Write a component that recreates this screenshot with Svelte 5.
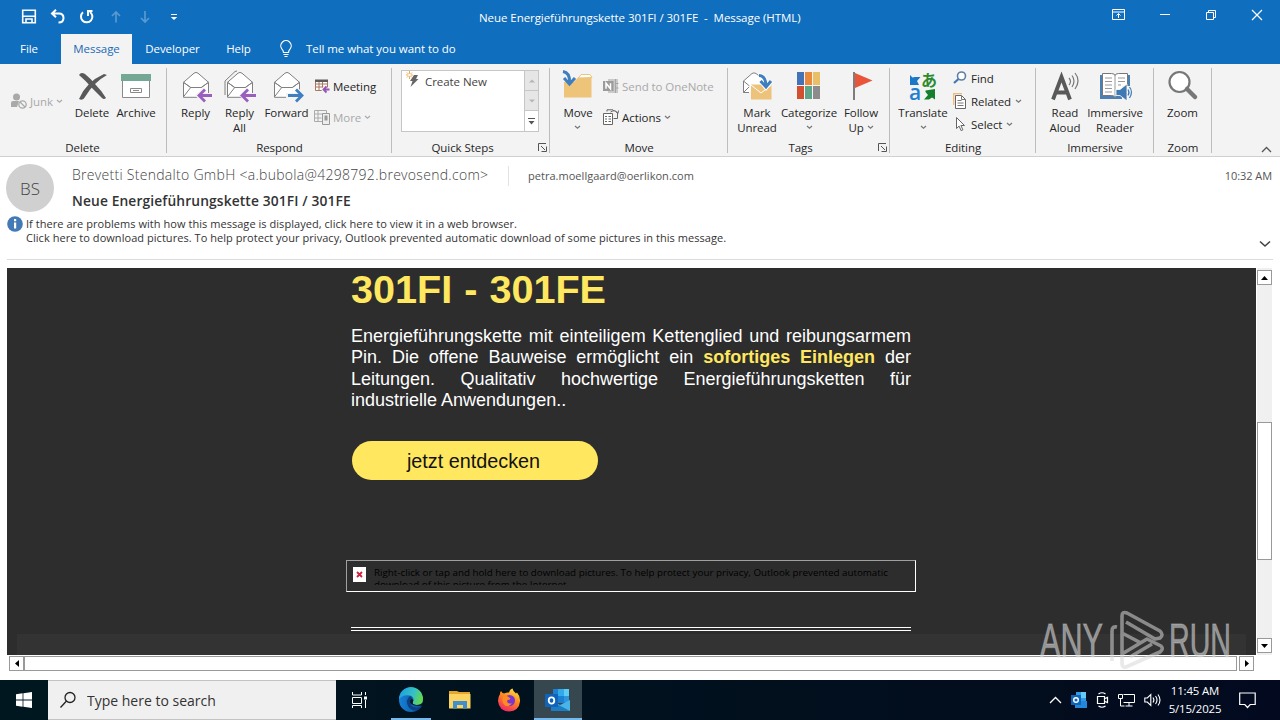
<script lang="ts">
  const tabs = ['File', 'Message', 'Developer', 'Help'];
  let activeTab = $state('Message');
  let search = $state('');
</script>

{#snippet chevron()}
  <svg class="chev" width="7" height="5" viewBox="0 0 7 5"><path d="M1 1l2.5 2.3L6 1" /></svg>
{/snippet}

{#snippet launcher()}
  <svg class="launcher" width="9" height="9" viewBox="0 0 9 9">
    <path d="M.5 8V.5H8M3 3l4 4M8.5 3.5v5h-5" />
  </svg>
{/snippet}

{#snippet envelope()}
  <path class="paper" d="M3.5 12.5v14.8h25V12.5" />
  <path class="paper" d="M3.5 12.3L14 3.2q2-1.6 4 0l10.5 9.1-7.2 5.2H10.7z" />
  <path class="line" d="M3.5 26.8l7.2-9.3M3.5 12.3l7.2 5.2h10.6l7.2-5.2" />
{/snippet}

<div class="screen">
  <header class="titlebar">
    <div class="quick-access">
      <svg width="16" height="16" viewBox="0 0 16 16">
        <path class="w" d="M1.7 1.2h12.6v12.6H1.7zM2 7.2h12M5 13.500v-3.500h6v3.500" stroke-width="1.6" />
      </svg>
      <svg width="16" height="16" viewBox="0 0 16 16">
        <path class="w" d="M6 .8L2 4.500l4 3.800M2.500 4.500H9q4.500 0 4.500 4.500Q13.500 13.500 8.500 13.500" stroke-width="2" />
      </svg>
      <svg width="16" height="16" viewBox="0 0 16 16">
        <path class="w" d="M4 3.300A5.700 5.700 0 1 0 11 3M9 7V2h4.500" stroke-width="2" />
      </svg>
      <svg class="dim" width="16" height="16" viewBox="0 0 16 16">
        <path class="w" d="M8 13.500V3M4 7l4-4 4 4" stroke-width="1.700" />
      </svg>
      <svg class="dim" width="16" height="16" viewBox="0 0 16 16">
        <path class="w" d="M8 2v11M4 9l4 4 4-4" stroke-width="1.700" />
      </svg>
      <svg width="16" height="16" viewBox="0 0 16 16">
        <path d="M5 5h6v1H5zM4.800 8h6.400L8 11z" fill="#fff" />
      </svg>
    </div>
    <span class="title">Neue Energieführungskette 301FI / 301FE &nbsp;-&nbsp; Message (HTML)</span>
    <div class="window-buttons">
      <svg width="14" height="12" viewBox="0 0 14 12"><path class="w" d="M1.500.5h12v10h-12zM1.500 3h12M7.500 9V5M5.500 6.500l2-2 2 2" /></svg>
      <svg width="12" height="12" viewBox="0 0 12 12"><path class="w" d="M1 5.500h10" /></svg>
      <svg width="12" height="12" viewBox="0 0 12 12"><path class="w" d="M1.500 3.500h7v7h-7zM3.500 3V1.500h7v7H9" /></svg>
      <svg width="12" height="12" viewBox="0 0 12 12"><path class="w" d="M1 1l10 10M11 1L1 11" stroke-width="1.200" /></svg>
    </div>
  </header>

  <nav class="tabs">
    {#each tabs as tab}
      <button class={['tab', tab.toLowerCase(), { active: tab === activeTab }]} onclick={() => (activeTab = tab)}>{tab}</button>
    {/each}
    <svg class="bulb" width="14" height="18" viewBox="0 0 14 18">
      <path class="w" d="M4.500 12.500q0-2-1.700-3.600a5.200 5.200 0 1 1 8.400 0Q9.500 10.500 9.500 12.500zM4.500 14.500h5M5.500 16.500h3" stroke-width="1.200" />
    </svg>
    <span class="tell">Tell me what you want to do</span>
  </nav>

  <section class="ribbon">
    <div class="group delete">
      <div class="tools">
        <div class="small one off">
          <span class="row">
            <svg width="16" height="16" viewBox="0 0 16 16">
              <circle cx="5.500" cy="4" r="3.500" fill="#a9a9a9" />
              <path d="M0 14V9.500Q0 8 2 8h6l-2 6z" fill="#a9a9a9" />
              <circle cx="11.500" cy="11.500" r="3.700" fill="#f3f3f3" stroke="#a9a9a9" stroke-width="1.300" />
              <path d="M9 9l5 5" stroke="#a9a9a9" stroke-width="1.300" />
            </svg>
            <span>Junk</span>{@render chevron()}
          </span>
        </div>
        <div class="big">
          <svg width="32" height="32" viewBox="0 0 32 32">
            <path d="M3 5q2-3.500 6-1 5 4 10 10 6 6 11 14-2 2-4 0-5-5-10-10Q9 10 3 5z" fill="#595959" />
            <path d="M31 5Q18 12 9 27q-2 4-6 2Q10 12 28 4z" fill="#595959" />
          </svg>
          <span>Delete</span>
        </div>
        <div class="big">
          <svg width="32" height="32" viewBox="0 0 32 32">
            <path d="M2.500 10h27v17.500h-27z" fill="#fff" stroke="#8a8a8a" />
            <path d="M1 4h30v7H1z" fill="#75a795" />
            <path d="M10.500 18.500h11v4h-11zM13 20.500h6" fill="none" stroke="#8a8a8a" />
          </svg>
          <span>Archive</span>
        </div>
      </div>
      <div class="caption">Delete</div>
    </div>

    <div class="group respond">
      <div class="tools">
        <div class="big">
          <svg width="32" height="32" viewBox="0 0 32 32">
            {@render envelope()}
            <path d="M33 25.500H19M25 19.500l-6.500 6 6.500 6" class="halo" />
            <path d="M32 25.500H19M25 19.500l-6 6 6 6" class="purple" />
          </svg>
          <span>Reply</span>
        </div>
        <div class="big">
          <svg width="32" height="32" viewBox="0 0 32 32">
            <path class="line" d="M1 25V11L11 1.500l2-.5" />
            {@render envelope()}
            <path d="M33 25.500H19M25 19.500l-6.500 6 6.500 6" class="halo" />
            <path d="M32 25.500H18M24 19.500l-6 6 6 6" class="purple" />
          </svg>
          <span>Reply<br />All</span>
        </div>
        <div class="big forward">
          <svg width="32" height="32" viewBox="0 0 32 32">
            {@render envelope()}
            <path d="M15 25.500h16M25 19.500l6.500 6-6.500 6" class="halo" />
            <path d="M17 25.500h14M25 19.500l6 6-6 6" class="blue" />
          </svg>
          <span>Forward</span>
        </div>
        <div class="small two">
          <span class="row">
            <svg width="16" height="16" viewBox="0 0 16 16">
              <path d="M1.500 2.500h12v10h-12zM1.500 6h12M5 3v9M8.500 3v9M1.500 9h12" fill="#fff" stroke="#a8775c" />
              <path d="M1 1.500h13V4H1z" fill="#5b5b5b" />
              <path d="M16 11.500H9.500M12.500 8.500l-3 3 3 3" fill="none" stroke="#f3f3f3" stroke-width="4" />
              <path d="M15.500 11.500H9.500M12.500 8.500l-3 3 3 3" fill="none" stroke="#9055b5" stroke-width="1.800" />
            </svg>
            <span>Meeting</span>
          </span>
          <span class="row off">
            <svg width="16" height="16" viewBox="0 0 16 16">
              <path d="M.5 1.500h12v11H.5zM.5 5h12M4 2v10M.5 9h7" fill="none" stroke="#aaa" />
              <path d="M8.500 4.500h7v11h-7z" fill="#eee" stroke="#999" />
              <path d="M10.500 6.500h3v5h-3z" fill="#999" />
            </svg>
            <span>More</span>{@render chevron()}
          </span>
        </div>
      </div>
      <div class="caption">Respond</div>
    </div>

    <div class="group steps">
      <div class="tools">
        <div class="gallery">
          <div class="gallery-item">
            <svg width="16" height="18" viewBox="0 0 16 18">
              <path d="M3.500 0v8M0 4h7M1 1.500l5 5M6 1.500l-5 5" stroke="#e8a33d" stroke-width=".9" />
              <circle cx="3.500" cy="4" r="1.300" fill="#fff" />
              <path d="M8 4h4l-2 4h2.500L4.500 16l2-6H4z" fill="#666" />
            </svg>
            <span>Create New</span>
          </div>
          <div class="gallery-nav">
            <span><svg width="6" height="4" viewBox="0 0 6 4"><path d="M0 3.500L3 .5l3 3z" fill="#b5b5b5" /></svg></span>
            <span><svg width="6" height="4" viewBox="0 0 6 4"><path d="M0 .5l3 3 3-3z" fill="#b5b5b5" /></svg></span>
            <span class="on"><svg width="7" height="7" viewBox="0 0 7 7"><path d="M0 0h7v1H0zM.5 3l3 3.500 3-3.500z" fill="#555" /></svg></span>
          </div>
        </div>
      </div>
      <div class="caption">Quick Steps</div>
      {@render launcher()}
    </div>

    <div class="group move">
      <div class="tools">
        <div class="big">
          <svg width="32" height="32" viewBox="0 0 32 32">
            <path d="M2 27.500V12h10l4-4.500h13.500v20z" fill="#eec47a" />
            <path d="M16.500 8l2.500-3.500h9l2 3z" fill="#fff" stroke="#eec47a" />
            <path d="M1 1.500q7 1 6.500 11M2 8l5.500 6L13 8" fill="none" stroke="#3f7fbf" stroke-width="3" />
          </svg>
          <span>Move<br />{@render chevron()}</span>
        </div>
        <div class="small two">
          <span class="row off">
            <svg width="16" height="16" viewBox="0 0 16 16">
              <path d="M5 1h10v14H5z" fill="#c9c9c9" />
              <path d="M12.500 1v14M12 5.500h3.500M12 10h3.500" stroke="#a5a5a5" />
              <path d="M0 3h10.500v10H0z" fill="#9b9b9b" />
              <path d="M3 10.800V5.200l4.500 5.600V5.200" fill="none" stroke="#fff" stroke-width="1.500" />
            </svg>
            <span>Send to OneNote</span>
          </span>
          <span class="row">
            <svg width="16" height="16" viewBox="0 0 16 16">
              <path d="M.5 4.500h9v11h-9z" fill="#fff" stroke="#666" />
              <path d="M2 7.500h2M5.500 7.500h2.500M2 10h2M5.500 10h2.500M2 12.500h2M5.500 12.500h2.500" stroke="#666" />
              <path d="M4 2.500V.8h6l1.500 1.500M7.500 3q5-3 7 1v5.500h-4M12.500 2.500l2.500 2 .5-3" fill="none" stroke="#666" />
            </svg>
            <span>Actions</span>{@render chevron()}
          </span>
        </div>
      </div>
      <div class="caption">Move</div>
    </div>

    <div class="group tags">
      <div class="tools">
        <div class="big">
          <svg width="32" height="32" viewBox="0 0 32 32">
            <path class="paper" d="M8 22.500H2.500V11L11 3.500q2-1.300 4 0l9 7" />
            <path class="line" d="M2.500 11l6 5M8 17l-5.500 5.500" />
            <path d="M10 14.500h20.500v15H10z" fill="#edc27a" />
            <path d="M10 15l10 8 10.500-8" fill="none" stroke="#fff" />
            <path d="M17.500 5.500q7 0 7.500 10M19.500 11l5.500 6.500L30 11" fill="none" stroke="#fff" stroke-width="4.500" />
            <path d="M18 5.500q6.500 0 7 10M19.500 11l5.500 6L30 11" fill="none" stroke="#3f7fbf" stroke-width="3" />
          </svg>
          <span>Mark<br />Unread</span>
        </div>
        <div class="big">
          <svg width="32" height="32" viewBox="0 0 32 32">
            <path d="M4 2h7v13H4z" fill="#4472b8" /><path d="M12 2h7v13h-7z" fill="#e8893c" /><path d="M20 2h7v13h-7z" fill="#e9bf68" />
            <path d="M4 16h7v13H4z" fill="#d2502f" /><path d="M12 16h7v13h-7z" fill="#5fa58a" /><path d="M20 16h7v13h-7z" fill="#8c8c8c" />
          </svg>
          <span>Categorize<br />{@render chevron()}</span>
        </div>
        <div class="big">
          <svg width="32" height="32" viewBox="0 0 32 32">
            <path d="M8 2h2v28H8z" fill="#7d7d7d" /><path d="M10 3l17.500 7.500L10 18z" fill="#e9553a" />
          </svg>
          <span>Follow<br />Up {@render chevron()}</span>
        </div>
      </div>
      <div class="caption">Tags</div>
      {@render launcher()}
    </div>

    <div class="group editing">
      <div class="tools">
        <div class="big">
          <svg width="32" height="32" viewBox="0 0 32 32">
            <text x="14" y="16" class="kana">あ</text>
            <text x="2" y="29.500" class="latin">a</text>
            <path d="M3 5l2.500 2.500L8 7h5.500L10 11l2 4H3z" fill="#1c77c8" />
            <path d="M28 19v10.500l-3-2-3 2h-5l4-4.500-2.500-3v-1.500z" fill="#12802c" />
          </svg>
          <span>Translate<br />{@render chevron()}</span>
        </div>
        <div class="small three">
          <span class="row">
            <svg width="14" height="14" viewBox="0 0 14 14">
              <circle cx="8.500" cy="5" r="4" fill="#fff" stroke="#5d7ea8" stroke-width="1.600" /><path d="M5.500 8L1 12" stroke="#4577b0" stroke-width="2.200" />
            </svg>
            <span>Find</span>
          </span>
          <span class="row">
            <svg width="14" height="16" viewBox="0 0 14 16">
              <path d="M.7 12V.7H9" fill="none" stroke="#f0b876" stroke-width="1.300" />
              <path d="M2.500 2.500h6l4 4v9h-10z" fill="#fff" stroke="#666" /><path d="M8.500 2.500v4h4M4.500 7.500h4M4.500 10h6M4.500 12.500h6" fill="none" stroke="#777" />
            </svg>
            <span>Related</span>{@render chevron()}
          </span>
          <span class="row">
            <svg width="14" height="16" viewBox="0 0 14 16">
              <path d="M3.500 1.500v11l2.600-2.400 2 4.500 1.800-.8-2-4.300h3.600z" fill="#fff" stroke="#666" />
            </svg>
            <span>Select</span>{@render chevron()}
          </span>
        </div>
      </div>
      <div class="caption">Editing</div>
    </div>

    <div class="group immersive">
      <div class="tools">
        <div class="big">
          <svg width="32" height="32" viewBox="0 0 32 32">
            <path d="M4 29.500L12.500 7 21 29.500M7 22.500h11" fill="none" stroke="#595959" stroke-width="3.800" />
            <path d="M20 8q3 3.500 0 7M23 5.500q4 5.500 0 11.500M26 3q6 7.500 0 16" fill="none" stroke="#777" stroke-width="1.200" />
          </svg>
          <span>Read<br />Aloud</span>
        </div>
        <div class="big">
          <svg width="32" height="32" viewBox="0 0 32 32">
            <path d="M1 5h30v24H1z" fill="#4a80b5" />
            <path d="M3.500 3.500h9q3 0 3.500 2 .5-2 3.500-2h9v22h-9q-3 0-3.500 2-.5-2-3.500-2h-9z" fill="#fff" stroke="#777" />
            <path d="M16 5v22M6 8h7M6 11.500h7M6 15h7M6 18.500h7M6 22h7M19 8h7M19 11.500h7M19 15h3" stroke="#999" />
            <path d="M23 16h9v15h-9z" fill="#f3f3f3" />
            <path d="M17 19.500h4l7-5.500v17l-7-5.500h-4z" fill="#3f79b3" stroke="#fff" stroke-width=".8" />
            <path d="M29 19.500q2 3 0 6M30.500 17q4 5 0 11" fill="none" stroke="#3f79b3" stroke-width="1.200" />
          </svg>
          <span>Immersive<br />Reader</span>
        </div>
      </div>
      <div class="caption">Immersive</div>
    </div>

    <div class="group zoom">
      <div class="tools">
        <div class="big">
          <svg width="32" height="32" viewBox="0 0 32 32">
            <circle cx="12.500" cy="12" r="10" fill="#fff" stroke="#777" stroke-width="2.200" /><path d="M20 19l8 8" stroke="#777" stroke-width="4.500" stroke-linecap="round" />
          </svg>
          <span>Zoom</span>
        </div>
      </div>
      <div class="caption">Zoom</div>
    </div>
    <svg class="collapse" width="11" height="7" viewBox="0 0 11 7"><path d="M1 6l4.500-4.500L10 6" /></svg>
  </section>

  <section class="envelope">
    <div class="meta">
      <div class="avatar">BS</div>
      <div class="who">
        <div class="from-line">
          <span class="from">Brevetti Stendalto GmbH &lt;a.bubola@4298792.brevosend.com&gt;</span>
          <span class="to">petra.moellgaard@oerlikon.com</span>
          <time>10:32 AM</time>
        </div>
        <div class="subject">Neue Energieführungskette 301FI / 301FE</div>
      </div>
    </div>
    <div class="info">
      <svg width="16" height="16" viewBox="0 0 16 16">
        <circle cx="8" cy="8" r="7.800" fill="#4379b5" /><path d="M7 6.500h2.200v6H7zM7 3h2.200v2.200H7z" fill="#fff" />
      </svg>
      <div class="info-text">
        <div class="first">If there are problems with how this message is displayed, click here to view it in a web browser.</div>
        <div>Click here to download pictures. To help protect your privacy, Outlook prevented automatic download of some pictures in this message.</div>
      </div>
      <svg class="expand" width="12" height="8" viewBox="0 0 12 8"><path d="M1 1.500l5 4.500 5-4.500" /></svg>
    </div>
  </section>

  <main class="reader">
    <article class="mail">
      <div class="content">
        <h1>301FI - 301FE</h1>
        <p>
          Energieführungskette mit einteiligem Kettenglied und reibungsarmem Pin. Die offene Bauweise ermöglicht ein
          <b>sofortiges Einlegen</b> der Leitungen. Qualitativ hochwertige Energieführungsketten für industrielle Anwendungen..
        </p>
        <div class="cta">jetzt entdecken</div>
        <div class="blocked">
          <svg width="13" height="15" viewBox="0 0 13 15">
            <path d="M0 0h13v15H0z" fill="#fff" /><path d="M4 5l5 5M9 5l-5 5" stroke="#d0203a" stroke-width="1.800" />
          </svg>
          <span>Right-click or tap and hold here to download pictures. To help protect your privacy, Outlook prevented automatic download of this picture from the Internet.</span>
        </div>
        <hr />
      </div>
      <div class="footer-band"></div>
    </article>
    <div class="vscroll">
      <span class="arrow"><svg width="7" height="4" viewBox="0 0 7 4"><path d="M0 4l3.500-4L7 4z" /></svg></span>
      <span class="thumb"></span>
      <span class="arrow"><svg width="7" height="4" viewBox="0 0 7 4"><path d="M0 0l3.500 4L7 0z" /></svg></span>
    </div>
  </main>
  <div class="hscroll">
    <span class="arrow"><svg width="4" height="7" viewBox="0 0 4 7"><path d="M4 0L0 3.500 4 7z" /></svg></span>
    <span class="thumb"></span>
    <span class="arrow"><svg width="4" height="7" viewBox="0 0 4 7"><path d="M0 0l4 3.500L0 7z" /></svg></span>
  </div>

  <footer class="taskbar">
    <div class="start">
      <svg width="16" height="16" viewBox="0 0 16 16"><path d="M0 2.200L6.600 1.300v6.300H0zM7.400 1.200L16 0v7.600H7.400zM0 8.400h6.600v6.300L0 13.800zM7.400 8.400H16V16l-8.600-1.200z" fill="#fff" /></svg>
    </div>
    <label class="search">
      <svg width="18" height="18" viewBox="0 0 18 18"><circle cx="11" cy="6.500" r="5" /><path d="M7.500 10L1.500 16.500" /></svg>
      <input type="text" placeholder="Type here to search" bind:value={search} />
    </label>
    <div class="apps">
      <div class="app">
        <svg width="18" height="16" viewBox="0 0 18 16"><path d="M1.500 0v3h9V0M1.500 5.500h9v6h-9zM1.500 16v-2.500h9V16M14.500 0v3M14.500 8v8" fill="none" stroke="#fff" /><path d="M13 4.500h3v3h-3z" fill="#fff" /></svg>
      </div>
      <div class="app edge running">
        <svg width="26" height="26" viewBox="0 0 26 26">
          <defs>
            <linearGradient id="edge-top" x1="0" x2="1" y1=".2" y2=".5"><stop offset="0" stop-color="#1b9de2" /><stop offset=".6" stop-color="#35c1c4" /><stop offset="1" stop-color="#66d84b" /></linearGradient>
            <linearGradient id="edge-low" x1="0" x2="1"><stop offset="0" stop-color="#1683d8" /><stop offset="1" stop-color="#0c4a94" /></linearGradient>
          </defs>
          <circle cx="13" cy="13" r="12" fill="url(#edge-low)" />
          <path d="M1 12A12 12 0 0 1 25 12q0 6-6.500 6-5 0-3.500-3 2-5-3-6.500Q5 7 1 12z" fill="url(#edge-top)" />
          <path d="M12 9q-5 4-2 10 3 5 9 4.500 3-1 5-4.500-5 3-9.500.5-3.500-2.500-.5-6 .5-3-2-4.500z" fill="#0d3f83" />
          <path d="M13.500 12q-2.500 2-.5 5 3 2.500 11 1.500l1.500-3.500q-2 3-7 3-5-.5-3.500-3.500 1-2-1.500-2.500z" fill="#001722" />
        </svg>
      </div>
      <div class="app">
        <svg width="24" height="20" viewBox="0 0 24 20">
          <path d="M1 1h8l2 1h11v16H1z" fill="#e6a52c" /><path d="M1 4h21.500v14.500H1z" fill="#fcd462" />
          <path d="M5 18.500V11h14v7.500h-4V15H9v3.500z" fill="#3f8fcf" />
        </svg>
      </div>
      <div class="app">
        <svg width="24" height="24" viewBox="0 0 24 24">
          <defs><linearGradient id="fox" x1=".8" x2=".3" y1="0" y2="1"><stop offset="0" stop-color="#ffe14a" /><stop offset=".45" stop-color="#ff8a1c" /><stop offset="1" stop-color="#f0246a" /></linearGradient></defs>
          <path d="M3 6q0-2 1-3 1 2 3 2.500Q10 4 12 4.500 13 1 15.500.5q.5 3 3.500 5l1-1q3.500 4 3 9Q22 23 12 23.500 2 23 1 13q0-4 2-7z" fill="url(#fox)" />
          <circle cx="12.500" cy="12.500" r="5.500" fill="#7a35d0" />
          <path d="M6 9q4-2 6 .5 2 .5 1 2-3 0-3 2 1 3 5 1.500-3 4.500-7 2.500-4-3-2-8.500z" fill="#ff8c22" />
        </svg>
      </div>
      <div class="app current running">
        <svg width="26" height="24" viewBox="0 0 26 24">
          <path d="M8 1h16v14H8z" fill="#1a80d4" /><path d="M13 1h6v7h-6z" fill="#32a9e8" /><path d="M19 1h5v7h-5z" fill="#5ccbf5" /><path d="M19 8h5v6h-5z" fill="#2f96dd" />
          <path d="M6 23V12l9 5 10-5v11z" fill="#48b5e6" /><path d="M6 13l19 10H6z" fill="#1b7dc5" />
          <path d="M0 6h13v13H0z" fill="#0f63b8" /><ellipse cx="6.500" cy="12.500" rx="2.800" ry="3.200" fill="none" stroke="#fff" stroke-width="1.800" />
        </svg>
      </div>
    </div>
    <div class="tray">
      <svg width="13" height="8" viewBox="0 0 13 8"><path class="w" d="M1 7l5.500-5.500L12 7" stroke-width="1.300" /></svg>
      <svg width="16" height="16" viewBox="0 0 16 16">
        <path d="M5 0h10v14H5z" fill="#2f9be8" /><path d="M10 0h5v6h-5z" fill="#65cbf5" /><path d="M4 16V9h12v7z" fill="#2488d8" /><path d="M0 3h10v10H0z" fill="#0f63b8" />
        <circle cx="5" cy="8" r="2.300" fill="none" stroke="#fff" stroke-width="1.400" />
      </svg>
      <svg width="13" height="16" viewBox="0 0 13 16"><path class="w" d="M1.500 4.500h7v7h-7zM9 6.500l2.500-1v5l-2.500-1M2.500 2q3.500-2.500 7 0M2.500 14q3.500 2.500 7 0" stroke-width="1.200" /></svg>
      <svg width="17" height="14" viewBox="0 0 17 14"><path class="w" d="M5.500 1.500h11v8h-11M11 10v3M7.500 13h7M.5 1.500h4v4h-4zM2.500 5.500v7.500h4" /></svg>
      <svg width="17" height="14" viewBox="0 0 17 14"><path class="w" d="M.8 5h2.500l3.500-3.500v11L3.300 9H.8zM9 4.500q1.800 2.500 0 5M11.500 3q3 4 0 8M14 1.500q4 5.500 0 11" stroke-width="1.100" /></svg>
      <div class="clock"><span>11:45 AM</span><span class="date">5/15/2025</span></div>
      <svg class="notify" width="17" height="17" viewBox="0 0 17 17"><path class="w" d="M.7 1h15.500v11.500h-5L8.500 15.500l-2.700-3H.7z" stroke-width="1.200" /></svg>
    </div>
  </footer>

  <svg class="watermark" width="200" height="66" viewBox="0 0 200 66">
    <text x="4" y="50" textLength="63" lengthAdjust="spacingAndGlyphs">ANY</text>
    <text x="133" y="50" textLength="62" lengthAdjust="spacingAndGlyphs">RUN</text>
    <path d="M76 54V24q0-5 5-4M86 47V9q0-5 5-3l33 18q4 4 0 7l-5 1L90 15M86 47l25-15 14 7q3 3-1 6L90 60q-4 1-4-4V26l19 10M94 50l22-13" />
  </svg>
</div>

<style>
  :global(body) {
    background: #fff;
  }
  .screen {
    position: relative;
    width: 1280px;
    height: 720px;
    overflow: hidden;
    display: flex;
    flex-direction: column;
    background: #fff;
    color: #262626;
    font: 11.5px/15px 'Open Sans', 'Noto Sans', sans-serif;
    letter-spacing: -0.06px;
  }
  svg {
    display: block;
    flex: none;
    overflow: visible;
  }
  .w {
    fill: none;
    stroke: #fff;
  }

  .titlebar {
    height: 34px;
    flex: none;
    display: grid;
    grid-template-columns: 479px 1fr auto;
    align-items: center;
    background: #106ebe;
    color: #fff;
  }
  .quick-access {
    display: flex;
    gap: 13px;
    padding-left: 21px;
  }
  .dim {
    opacity: 0.3;
  }
  .title {
    white-space: nowrap;
  }
  .window-buttons {
    display: flex;
    align-items: center;
    gap: 34px;
    padding: 0 17px 4px 0;
  }

  .tabs {
    height: 30px;
    flex: none;
    display: flex;
    align-items: center;
    background: #106ebe;
    color: #fff;
  }
  .tab {
    height: 30px;
    padding: 0 0 2px;
    border: 0;
    background: none;
    color: inherit;
    font: inherit;
    font-size: 11.5px;
    letter-spacing: inherit;
  }
  .tab.file {
    width: 58px;
  }
  .tab.message {
    width: 71px;
    margin-left: 3px;
  }
  .tab.developer {
    width: 81px;
  }
  .tab.help {
    width: 51px;
  }
  .tab.active {
    background: #f3f3f3;
    color: #1a6ab5;
  }
  .bulb {
    margin-left: 15px;
  }
  .tell {
    margin-left: 13px;
    padding-bottom: 2px;
  }

  .ribbon {
    position: relative;
    height: 92px;
    flex: none;
    display: flex;
    background: #f3f3f3;
    border-bottom: 1px solid #d0d0d0;
  }
  .group {
    position: relative;
    box-sizing: border-box;
    height: 92px;
    flex: none;
  }
  .group::after {
    content: '';
    position: absolute;
    top: 4px;
    right: 0;
    width: 1px;
    height: 85px;
    background: #bdbdbd;
  }
  .group.delete { width: 167px; }
  .group.respond { width: 225px; }
  .group.steps { width: 158px; }
  .group.move { width: 178px; }
  .group.tags { width: 162px; }
  .group.editing { width: 146px; }
  .group.immersive { width: 118px; }
  .group.zoom { width: 58px; }
  .tools {
    display: grid;
    height: 70px;
    padding-top: 6px;
  }
  .delete .tools { grid-template-columns: 59px 44px 44px; padding-left: 11px; }
  .respond .tools { grid-template-columns: 45px 43px 51px 1fr; padding-left: 6px; }
  .steps .tools { padding-left: 9px; }
  .move .tools { grid-template-columns: 50px 1fr; padding-left: 3px; }
  .tags .tools { grid-template-columns: repeat(3, 52px); padding-left: 3px; }
  .editing .tools { grid-template-columns: 60px 1fr; padding-left: 3px; }
  .immersive .tools { grid-template-columns: 48px 52px; padding-left: 5px; }
  .zoom .tools { grid-template-columns: 57px; }
  .caption {
    text-align: center;
    line-height: 16px;
  }
  .delete .caption {
    padding-right: 2px;
  }
  .steps .caption {
    padding-right: 17px;
  }
  .tags .caption {
    padding-right: 17px;
  }
  .launcher {
    position: absolute;
    right: 3px;
    bottom: 4px;
    fill: none;
    stroke: #555;
  }
  .big {
    display: flex;
    flex-direction: column;
    align-items: center;
    gap: 3px;
    text-align: center;
    white-space: nowrap;
  }
  .forward svg {
    margin-left: 1px;
  }
  .chev {
    display: inline-block;
    vertical-align: 2px;
    fill: none;
    stroke: #777;
    stroke-width: 1.2;
  }
  .small {
    display: flex;
    flex-direction: column;
  }
  .small.one {
    padding-top: 23px;
  }
  .small.two {
    padding-top: 8px;
    gap: 15px;
    padding-left: 2px;
  }
  .move .small.two {
    padding-left: 0;
  }
  .small.three {
    gap: 7px;
  }
  .row {
    display: flex;
    align-items: center;
    height: 16px;
    gap: 3px;
    white-space: nowrap;
  }
  .small.one .row {
    gap: 3px;
  }
  .three .row {
    gap: 4px;
  }
  .off {
    color: #a9a9a9;
  }
  .off .chev {
    stroke: #aaa;
  }
  .paper {
    fill: #fff;
    stroke: #808080;
  }
  .line {
    fill: none;
    stroke: #808080;
  }
  .halo {
    fill: none;
    stroke: #f3f3f3;
    stroke-width: 5;
  }
  .purple {
    fill: none;
    stroke: #9a5fbe;
    stroke-width: 2.8;
  }
  .blue {
    fill: none;
    stroke: #3f7fbf;
    stroke-width: 2.8;
  }
  .kana {
    font: bold 16px 'Noto Sans CJK JP', sans-serif;
    fill: #2c8a2f;
  }
  .latin {
    font: 600 21px 'Open Sans', sans-serif;
    fill: #1f7fd0;
  }
  .gallery {
    box-sizing: border-box;
    width: 138px;
    height: 62px;
    display: grid;
    grid-template-columns: 1fr 14px;
    border: 1px solid #c6c6c6;
    background: #fff;
    color: #444;
  }
  .gallery-item {
    display: flex;
    gap: 3px;
    padding-left: 4px;
    line-height: 22px;
  }
  .gallery-nav {
    display: grid;
    grid-template-rows: repeat(3, 20px);
    border-left: 1px solid #c6c6c6;
  }
  .gallery-nav span {
    display: grid;
    place-items: center;
    box-sizing: border-box;
    background: #e6e6e6;
    border-bottom: 1px solid #c6c6c6;
  }
  .gallery-nav .on {
    background: #fff;
    border: 0;
  }
  .collapse {
    position: absolute;
    right: 8px;
    bottom: 3px;
    fill: none;
    stroke: #555;
    stroke-width: 1.3;
  }

  .envelope {
    height: 111px;
    flex: none;
    box-sizing: border-box;
    padding: 7px 7px 0 6px;
  }
  .meta {
    display: flex;
    gap: 18px;
    height: 52px;
  }
  .avatar {
    width: 48px;
    height: 48px;
    border-radius: 50%;
    background: #d0d0d0;
    color: #444;
    font-size: 17px;
    font-weight: 300;
    line-height: 49px;
    text-align: center;
  }
  .who {
    flex: 1;
  }
  .from-line {
    display: flex;
    align-items: center;
    height: 23px;
    color: #555;
  }
  .from {
    width: 436px;
    padding-bottom: 2px;
    font-size: 14px;
    font-weight: 300;
    letter-spacing: 0.29px;
    color: #444;
    white-space: nowrap;
  }
  .to {
    flex: 1;
    padding-left: 19px;
    border-left: 1px solid #e2e2e2;
    line-height: 20px;
    font-size: 11px;
    letter-spacing: 0.03px;
  }
  time {
    font-size: 11px;
    padding-right: 1px;
  }
  .subject {
    margin-top: 5px;
    font-size: 13.8px;
    font-weight: 600;
    letter-spacing: 0.12px;
    line-height: 18px;
    color: #333;
  }
  .info {
    display: flex;
    box-sizing: border-box;
    height: 44px;
    margin-left: 1px;
    gap: 3px;
    border-bottom: 1px solid #dcdcdc;
    font-size: 11px;
    line-height: 14px;
    letter-spacing: 0.045px;
    color: #333;
  }
  .info-text {
    flex: 1;
    padding-top: 1px;
    white-space: nowrap;
  }
  .expand {
    align-self: flex-end;
    margin: 0 2px 11px 0;
    fill: none;
    stroke: #444;
    stroke-width: 1.6;
  }

  .reader {
    height: 387px;
    flex: none;
    display: flex;
    gap: 1px;
    padding-left: 7px;
  }
  .mail {
    width: 1249px;
    height: 387px;
    overflow: hidden;
    background: #2d2d2d;
    color: #fff;
    font-family: 'Liberation Sans', Arial, sans-serif;
    letter-spacing: 0;
  }
  .content {
    width: 560px;
    height: 366px;
    margin-left: 344px;
  }
  h1 {
    margin: 0;
    height: 58px;
    font-size: 39.6px;
    line-height: 42px;
    word-spacing: 1px;
    color: #ffe75f;
  }
  p {
    margin: 0;
    font-size: 18px;
    line-height: 21.3px;
    text-align: justify;
  }
  b {
    color: #ffe75f;
  }
  .cta {
    width: 246px;
    height: 39px;
    margin: 30px 0 80px 1px;
    border-radius: 20px;
    background: #ffe75f;
    color: #111;
    font-size: 19.8px;
    line-height: 40px;
    text-align: center;
    text-indent: -3px;
  }
  .blocked {
    box-sizing: border-box;
    width: 570px;
    height: 32px;
    margin-left: -5px;
    padding: 6px 6px 5px;
    display: flex;
    gap: 8px;
    overflow: hidden;
    border: 1px solid #fff;
    border-top-color: #a0a0a0;
    border-left-color: #a0a0a0;
    color: #000;
    font: 9.8px/12px 'Open Sans', sans-serif;
  }
  .blocked span {
    height: 18px;
    width: 525px;
    overflow: hidden;
  }
  hr {
    margin: 35px 0 0;
    border: 0;
    border-top: 4px double #fff;
  }
  .footer-band {
    height: 21px;
    margin: 0 10px;
    background: #333;
  }
  .vscroll {
    width: 15px;
    display: flex;
    flex-direction: column;
    justify-content: space-between;
    padding: 2px 0;
    background: #f0f0f0;
  }
  .arrow,
  .thumb {
    box-sizing: border-box;
    border: 1px solid #999;
    background: #fff;
  }
  .arrow {
    display: grid;
    place-items: center;
    width: 15px;
    height: 15px;
  }
  .vscroll .thumb {
    height: 138px;
    margin-top: 58px;
  }
  .hscroll {
    display: flex;
    height: 25px;
    flex: none;
    padding: 1px 0 0 9px;
    box-sizing: border-box;
  }
  .hscroll .thumb {
    width: 1213px;
    height: 15px;
    margin-right: 2px;
  }

  .taskbar {
    height: 40px;
    flex: none;
    display: flex;
    background: linear-gradient(90deg, #001720, #020d1d 80%, #030a20);
    color: #fff;
  }
  .start {
    width: 48px;
    display: grid;
    place-items: center;
  }
  .search {
    width: 288px;
    box-sizing: border-box;
    display: flex;
    align-items: center;
    gap: 10px;
    padding-left: 11px;
    background: #f0f0f0;
    border: 1px solid #c4c4c4;
    border-width: 1px 0;
  }
  .search svg {
    fill: none;
    stroke: #222;
    stroke-width: 1.3;
  }
  .search input {
    flex: 1;
    min-width: 0;
    padding: 0;
    border: 0;
    outline: 0;
    background: none;
    font: 14px 'Open Sans', sans-serif;
  }
  .search input::placeholder {
    color: #333;
  }
  .apps {
    display: flex;
    gap: 1px;
    flex: 1;
  }
  .app {
    position: relative;
    width: 48px;
    display: grid;
    place-items: center;
  }
  .app.edge {
    margin-left: 2px;
  }
  .app.current {
    background: #36474f;
  }
  .running::after {
    content: '';
    position: absolute;
    bottom: 0;
    left: 4px;
    width: 40px;
    height: 2px;
    background: #76b9ed;
  }
  .current.running::after {
    left: 0;
    width: 48px;
  }
  .tray {
    display: flex;
    align-items: center;
    gap: 9px;
    padding-right: 24px;
  }
  .clock {
    display: flex;
    flex-direction: column;
    align-items: center;
    gap: 3px;
    width: 52px;
    padding-bottom: 2px;
    font-size: 11.4px;
    letter-spacing: -0.15px;
    white-space: nowrap;
  }
  .clock {
    margin-left: -1px;
  }
  .notify {
    margin-left: 9px;
  }
  .watermark {
    position: absolute;
    left: 1036px;
    top: 607px;
  }
  .watermark text {
    font: 49px 'Liberation Sans Narrow', 'Liberation Sans', sans-serif;
    letter-spacing: 0;
    fill: rgba(215, 215, 215, 0.6);
    stroke: rgba(215, 215, 215, 0.3);
    stroke-width: 1.4;
  }
  .watermark path {
    fill: none;
    stroke: rgba(215, 215, 215, 0.55);
    stroke-width: 3.6;
    stroke-linejoin: round;
  }
</style>
